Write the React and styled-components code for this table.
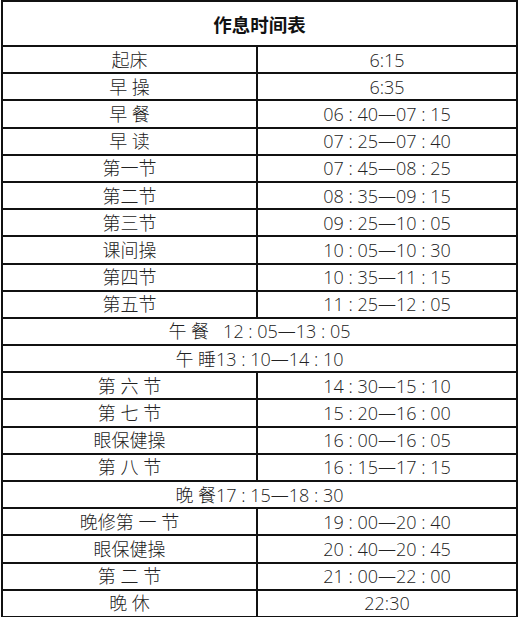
import React from 'react'
import styled, { createGlobalStyle } from "styled-components";

const GlobalStyle = createGlobalStyle`
  html, body {
    margin:0;
    padding:0;
    background:#fff;
  }
  body {
    font-family:"Open Sans", "Noto Sans CJK SC", sans-serif;
  }
`

const Table = styled.div`
  box-sizing:border-box;
  width:517px;
  margin-left:1px;
  border:2px solid #111;
  border-bottom:none;
  background:#fff;
  color:#222;
`

const Header = styled.div`
  box-sizing:border-box;
  height:45px;
  border-bottom:2px solid #111;
  display:flex;
  align-items:center;
  justify-content:center;
  font-family:"Noto Sans CJK SC", sans-serif;
  font-weight:700;
  font-size:18.5px;
  color:#111;
  padding-top:1px;
`

const Row = styled.div`
  box-sizing:border-box;
  height:27.2px;
  display:flex;
  border-bottom:2px solid #111;
`

const Cell = styled.div`
  box-sizing:border-box;
  flex:${p => (p.$full ? "1" : "none")};
  width:${p => (p.$full ? "auto" : p.$left ? "255px" : "258px")};
  border-right:${p => (p.$left ? "2px solid #111" : "none")};
  display:flex;
  align-items:center;
  justify-content:center;
  font-size:18px;
  font-weight:300;
  line-height:1;
  white-space:pre;
`

const schedule = [
  ["起床", "6:15"],
  ["早 操", "6:35"],
  ["早 餐", "06 : 40—07 : 15"],
  ["早 读", "07 : 25—07 : 40"],
  ["第一节", "07 : 45—08 : 25"],
  ["第二节", "08 : 35—09 : 15"],
  ["第三节", "09 : 25—10 : 05"],
  ["课间操", "10 : 05—10 : 30"],
  ["第四节", "10 : 35—11 : 15"],
  ["第五节", "11 : 25—12 : 05"],
  ["午 餐   12 : 05—13 : 05"],
  ["午 睡13 : 10—14 : 10"],
  ["第 六 节", "14 : 30—15 : 10"],
  ["第 七 节", "15 : 20—16 : 00"],
  ["眼保健操", "16 : 00—16 : 05"],
  ["第 八 节", "16 : 15—17 : 15"],
  ["晚 餐17 : 15—18 : 30"],
  ["晚修第 一 节", "19 : 00—20 : 40"],
  ["眼保健操", "20 : 40—20 : 45"],
  ["第 二 节", "21 : 00—22 : 00"],
  ["晚 休", "22:30"],
]

const App = () => {
  return (
    <>
      <GlobalStyle />
      <Table>
        <Header>作息时间表</Header>
        {schedule.map((item, i) => (
          <Row key={i}>
            {item.length === 1 ? (
              <Cell $full>{item[0]}</Cell>
            ) : (
              <>
                <Cell $left>{item[0]}</Cell>
                <Cell>{item[1]}</Cell>
              </>
            )}
          </Row>
        ))}
      </Table>
    </>
  )
}

export default App
